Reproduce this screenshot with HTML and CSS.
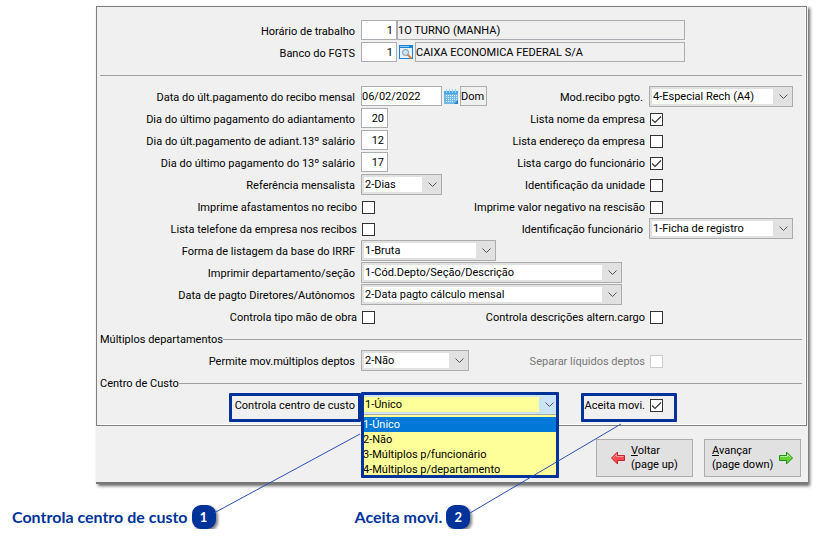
FILE: index.html
```
<!DOCTYPE html>
<html lang="pt-BR">
<head>
    <meta charset="UTF-8">
    <meta name="viewport" content="width=device-width, initial-scale=1.0">
    <title>Parâmetros da folha</title>
    <link rel="stylesheet" href="styles.css">
</head>
<body>

<main class="window">
    <form id="params">
        <div class="panel">
            <div class="row">
                <label class="label" for="horario">Horário de trabalho</label>
                <div class="lookup">
                    <input type="text" id="horario" class="num code" value="1">
                    <input type="text" class="grow" value="1O TURNO (MANHA)" aria-label="Descrição do horário" readonly>
                </div>
            </div>
            <div class="row">
                <label class="label" for="banco">Banco do FGTS</label>
                <div class="lookup">
                    <input type="text" id="banco" class="num code" value="1">
                    <button type="button" class="icon-btn" aria-label="Pesquisar banco">
                        <svg width="14" height="15" viewBox="0 0 14 15">
                            <rect x="0.5" y="0.5" width="13" height="13" fill="#e4f1fb" stroke="#1883d7"/>
                            <rect x="0" y="0" width="14" height="3" fill="#1883d7"/>
                            <rect x="1" y="1" width="9" height="1" fill="#8cc8f5"/>
                            <path d="M8.500 9.500L12.500 13.500" stroke="#e8813a" stroke-width="2"/>
                            <circle cx="6.500" cy="7.500" r="3" fill="#c9e6f8" stroke="#7c8b99"/>
                        </svg>
                    </button>
                    <input type="text" class="grow" value="CAIXA ECONOMICA FEDERAL S/A" aria-label="Nome do banco" readonly>
                </div>
            </div>

            <hr>

            <div class="row">
                <label class="label" for="dataPagto">Data do últ.pagamento do recibo mensal</label>
                <div class="date">
                    <input type="text" id="dataPagto" class="w-small" value="06/02/2022">
                    <button type="button" class="icon-btn" aria-label="Calendário">
                        <svg width="14" height="15" viewBox="0 0 14 15">
                            <rect x="0" y="2" width="14" height="13" fill="#6fb9e8"/>
                            <path d="M0 2h14v3H0z" fill="#4ba5e0"/>
                            <path d="M2.500 0v4M5.500 0v4M8.500 0v4M11.500 0v4" stroke="#9ad2f2"/>
                            <path d="M2 6.500h11M2 8.500h11M2 10.500h11M2 12.500h8" stroke="#e6f5fd" stroke-dasharray="1 1"/>
                            <path d="M10 15l4-4v4z" fill="#2a7fc4"/>
                        </svg>
                    </button>
                    <input type="text" class="day" value="Dom" aria-label="Dia da semana" readonly>
                </div>
                <label class="right" for="modRecibo">Mod.recibo pgto.</label>
                <div class="field"><select id="modRecibo" class="w-right"><option>4-Especial Rech (A4)</option></select></div>
            </div>
            <div class="row">
                <label class="label" for="diaAdiant">Dia do último pagamento do adiantamento</label>
                <input type="text" id="diaAdiant" class="num" value="20">
                <label class="right for-check" for="nomeEmpresa">Lista nome da empresa</label>
                <div class="field"><input type="checkbox" id="nomeEmpresa" checked></div>
            </div>
            <div class="row">
                <label class="label" for="diaAdiant13">Dia do últ.pagamento de adiant.13º salário</label>
                <input type="text" id="diaAdiant13" class="num" value="12">
                <label class="right for-check" for="endEmpresa">Lista endereço da empresa</label>
                <div class="field"><input type="checkbox" id="endEmpresa"></div>
            </div>
            <div class="row">
                <label class="label" for="dia13">Dia do último pagamento do 13º salário</label>
                <input type="text" id="dia13" class="num" value="17">
                <label class="right for-check" for="cargo">Lista cargo do funcionário</label>
                <div class="field"><input type="checkbox" id="cargo" checked></div>
            </div>
            <div class="row">
                <label class="label" for="referencia">Referência mensalista</label>
                <select id="referencia" class="w-small"><option>2-Dias</option></select>
                <label class="right for-check" for="unidade">Identificação da unidade</label>
                <div class="field"><input type="checkbox" id="unidade"></div>
            </div>
            <div class="row">
                <label class="label for-check" for="afastamentos">Imprime afastamentos no recibo</label>
                <input type="checkbox" id="afastamentos">
                <label class="right for-check" for="negativo">Imprime valor negativo na rescisão</label>
                <div class="field"><input type="checkbox" id="negativo"></div>
            </div>
            <div class="row">
                <label class="label for-check" for="telefone">Lista telefone da empresa nos recibos</label>
                <input type="checkbox" id="telefone">
                <label class="right" for="identFunc">Identificação funcionário</label>
                <div class="field"><select id="identFunc" class="w-right"><option>1-Ficha de registro</option></select></div>
            </div>
            <div class="row">
                <label class="label" for="irrf">Forma de listagem da base do IRRF</label>
                <select id="irrf" class="w-medium"><option>1-Bruta</option></select>
            </div>
            <div class="row">
                <label class="label" for="depto">Imprimir departamento/seção</label>
                <select id="depto" class="w-large"><option>1-Cód.Depto/Seção/Descrição</option></select>
            </div>
            <div class="row">
                <label class="label" for="diretores">Data de pagto Diretores/Autônomos</label>
                <select id="diretores" class="w-large"><option>2-Data pagto cálculo mensal</option></select>
            </div>
            <div class="row">
                <label class="label for-check" for="maoObra">Controla tipo mão de obra</label>
                <input type="checkbox" id="maoObra">
                <label class="right for-check" for="alternCargo">Controla descrições altern.cargo</label>
                <div class="field"><input type="checkbox" id="alternCargo"></div>
            </div>

            <div class="section-title">Múltiplos departamentos</div>
            <div class="row">
                <label class="label" for="multiplos">Permite mov.múltiplos deptos</label>
                <select id="multiplos" class="w-mid"><option>2-Não</option></select>
                <label class="right for-check disabled" for="liquidos">Separar líquidos deptos</label>
                <div class="field"><input type="checkbox" id="liquidos" disabled></div>
            </div>

            <div class="section-title">Centro de Custo</div>
            <div class="row">
                <label class="label" for="centroCusto"><span class="mark">Controla centro de custo</span></label>
                <div class="combo">
                    <select id="centroCusto"><option>1-Único</option></select>
                    <ul class="options" role="listbox" aria-label="Controla centro de custo">
                        <li role="option" aria-selected="true">1-Único</li>
                        <li role="option" aria-selected="false">2-Não</li>
                        <li role="option" aria-selected="false">3-Múltiplos p/funcionário</li>
                        <li role="option" aria-selected="false">4-Múltiplos p/departamento</li>
                    </ul>
                </div>
                <label class="right for-check" for="aceita">Aceita movi.</label>
                <div class="field"><span class="mark-check"><input type="checkbox" id="aceita" checked></span></div>
            </div>
        </div>

        <div class="buttons">
            <button type="button" class="nav-btn">
                <svg width="14" height="14" viewBox="0 0 14 14">
                    <path d="M0.500 7L6.500 1v3.500h7v5h-7V13z" fill="#fb4a50" stroke="#c3232b"/>
                    <path d="M2.500 6.500L5.500 3.500v2h7" fill="none" stroke="#ff9a9d"/>
                </svg>
                <span><u>V</u>oltar<br>(page up)</span>
            </button>
            <button type="button" class="nav-btn next">
                <span><u>A</u>vançar<br>(page down)</span>
                <svg width="14" height="14" viewBox="0 0 14 14">
                    <path d="M13.500 7L7.500 1v3.500h-7v5h7V13z" fill="#5fd335" stroke="#2c8a1c"/>
                    <path d="M1.500 5.500h7v-2l3 3" fill="none" stroke="#b0f090"/>
                </svg>
            </button>
        </div>
    </form>

    <!-- linhas que ligam as legendas aos campos -->
    <svg class="leader" width="530" height="110" viewBox="0 0 530 110">
        <path d="M264 28L118 107M525 18L374 107" stroke="#2a4fae" fill="none"/>
    </svg>
</main>

<div class="legend">
    <div class="legend-item">Controla centro de custo <span class="badge">1</span></div>
    <div class="legend-item">Aceita movi. <span class="badge">2</span></div>
</div>

</body>
</html>
```
FILE: styles.css
```
* {
    box-sizing: border-box;
}
body {
    margin: 0;
    padding-top: 6px;
    background-color: #fff;
    color: #000;
    font-family: Roboto, sans-serif;
    font-size: 11px;
    line-height: 24px;
}
input, select, button {
    font: inherit;
    color: inherit;
    margin: 0;
    border-radius: 0;
}
.window {
    position: relative;
    margin: 0 9px 0 96px;
    background-color: #f0f0f0;
    border-bottom: 2px solid #777;
    box-shadow: 2px 2px 3px rgba(0, 0, 0, 0.6);
}
.panel {
    margin-right: 1px;
    padding: 13px 4px 9px 3px;
    border: 1px solid #7f7f7f;
    box-shadow: inset -1px -1px #fff;
}
.row {
    display: flex;
    align-items: flex-start;
    gap: 6px;
    height: 22px;
    white-space: nowrap;
}
.label {
    flex: none;
    width: 255px;
    text-align: right;
}
.right {
    margin-left: auto;
}
.for-check {
    margin-right: -2px;
}
.label.for-check {
    width: 257px;
}
.field {
    flex: none;
    display: flex;
    width: 153px;
}
.disabled {
    color: #777;
}
hr {
    height: 1px;
    margin: 11px 0 10px;
    border: none;
    background-color: #a0a0a0;
}

/* campos */
input[type="text"] {
    height: 20px;
    padding: 0;
    border: 1px solid #abadb3;
    background-color: #fff;
    line-height: 18px;
}
input[type="text"]:read-only {
    background-color: #f0f0f0;
}
input.num {
    width: 27px;
    padding-right: 3px;
    text-align: right;
}
input.code {
    width: 36px;
}
.lookup {
    display: flex;
    flex: 0 1 324px;
}
.grow {
    flex: 1;
    min-width: 0;
}
.date {
    display: flex;
}
.day {
    width: 27px;
}
.icon-btn {
    display: flex;
    align-items: center;
    height: 20px;
    padding: 0 2px;
    border: none;
    background: none;
}
select {
    appearance: none;
    height: 21px;
    padding: 1px 20px 0 3px;
    border: 1px solid #acacac;
    background:
        url("data:image/svg+xml,%3Csvg xmlns='http://www.w3.org/2000/svg' width='9' height='6'%3E%3Cpath d='M.5 .5l4 4 4-4' fill='none' stroke='%23555'/%3E%3C/svg%3E") no-repeat right 4px center,
        linear-gradient(#fff, #fff) no-repeat 2px 2px / calc(100% - 21px) calc(100% - 4px),
        #e1e1e1;
    line-height: 18px;
}
.w-small {
    width: 81px;
}
.w-mid {
    width: 108px;
}
.w-medium {
    width: 135px;
}
.w-right {
    width: 144px;
}
.w-large {
    width: 261px;
}
input[type="checkbox"] {
    appearance: none;
    flex: none;
    width: 13px;
    height: 13px;
    margin: 5px 0 0 1px;
    border: 1px solid #333;
    background-color: #fff;
}
input[type="checkbox"]:checked {
    background-image: url("data:image/svg+xml,%3Csvg xmlns='http://www.w3.org/2000/svg' width='11' height='11'%3E%3Cpath d='M1 5.500l3 3 6-6' fill='none' stroke='%23333' stroke-width='1.200'/%3E%3C/svg%3E");
}
input[type="checkbox"]:disabled {
    border-color: #ccc;
}
.section-title {
    display: flex;
    align-items: flex-start;
    height: 22px;
}
.section-title::after {
    content: "";
    flex: 1;
    height: 1px;
    margin-top: 11px;
    background-color: #a0a0a0;
}

/* destaques */
.mark, .mark-check {
    position: relative;
    display: inline-block;
    height: 22px;
}
.mark-check {
    display: flex;
}
.mark::after, .mark-check::after, .combo::after {
    content: "";
    position: absolute;
    border: 3px solid #003399;
    border-radius: 1px;
    pointer-events: none;
}
.mark::after {
    inset: -1px -6px -6px;
}
.mark-check::after {
    inset: -1px -14px -6px -68px;
}
.combo {
    position: relative;
    width: 198px;
}
.combo::after {
    inset: -2px 0 -63px;
}
.combo select {
    display: block;
    width: 100%;
    background:
        url("data:image/svg+xml,%3Csvg xmlns='http://www.w3.org/2000/svg' width='9' height='6'%3E%3Cpath d='M.5 .5l4 4 4-4' fill='none' stroke='%23555'/%3E%3C/svg%3E") no-repeat right 4px center,
        linear-gradient(#ffff99, #ffff99) no-repeat 2px 2px / calc(100% - 21px) calc(100% - 4px),
        #cce4f7;
}
.options {
    position: absolute;
    top: 21px;
    left: 0;
    right: 0;
    margin: 0;
    padding: 2px 2px 0;
    background-color: #ffff99;
    list-style: none;
    line-height: 15px;
}
.options li[aria-selected="true"] {
    background-color: #0078d7;
    color: #fff;
}

/* rodapé */
.buttons {
    display: flex;
    justify-content: flex-end;
    gap: 11px;
    padding: 13px 7px 5px 0;
}
.nav-btn {
    display: flex;
    align-items: center;
    gap: 6px;
    width: 97px;
    height: 38px;
    padding: 0 0 0 14px;
    border: 1px solid #adadad;
    background-color: #e1e1e1;
    line-height: 14px;
    text-align: left;
    white-space: nowrap;
}
.nav-btn.next {
    padding: 0 0 0 7px;
}
.leader {
    position: absolute;
    top: 400px;
    left: 0;
    pointer-events: none;
}
.legend {
    display: flex;
    gap: 139px;
    margin: 21px 0 0 12px;
    color: #003399;
    font-family: Lato, sans-serif;
    font-size: 16px;
    font-weight: bold;
    line-height: 24px;
}
.legend-item {
    display: flex;
    gap: 4px;
    white-space: nowrap;
}
.badge {
    width: 24px;
    height: 24px;
    border-radius: 9px;
    background-color: #003399;
    box-shadow: 2px 2px 3px rgba(0, 0, 0, 0.5);
    color: #fff;
    font-size: 13px;
    text-align: center;
}
```
